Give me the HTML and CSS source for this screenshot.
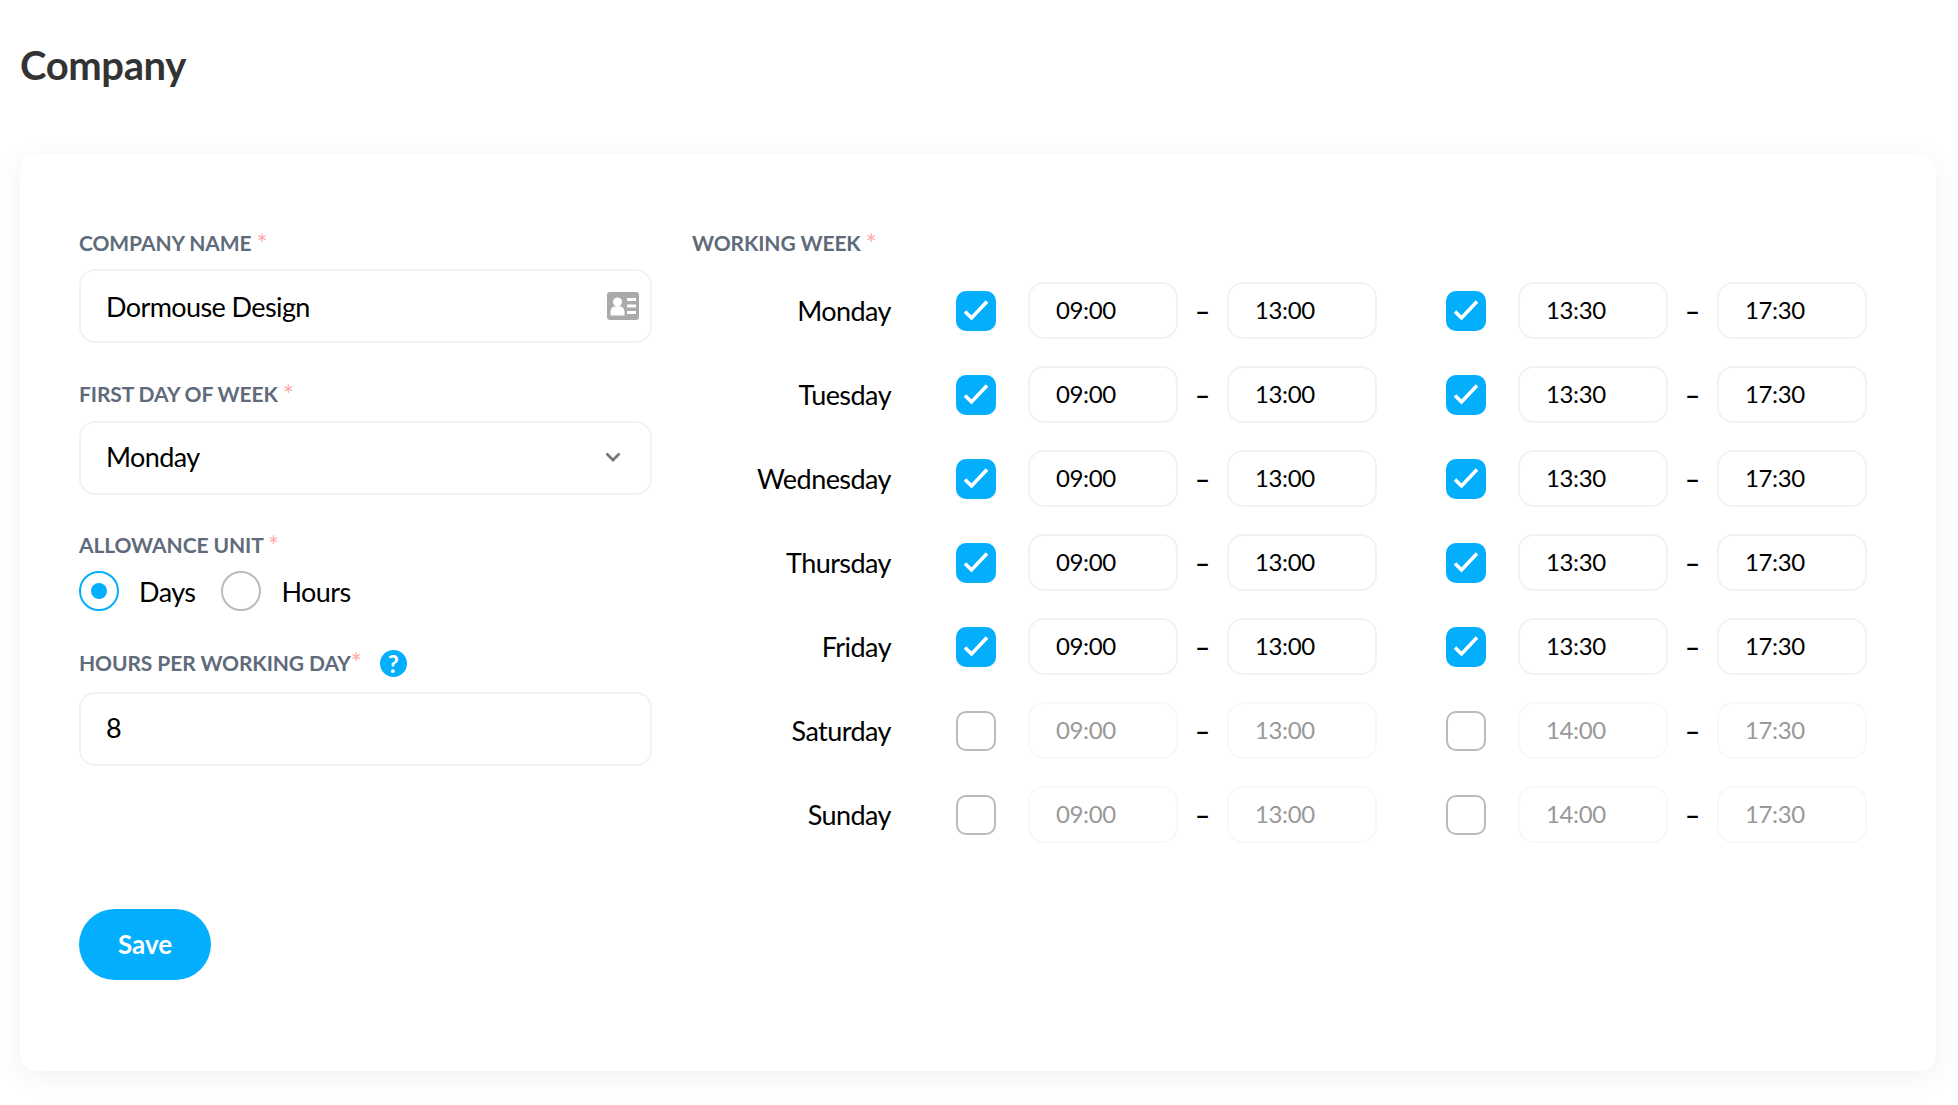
FILE: index.html
```html
<!DOCTYPE html>
<html lang="en">
<head>
<meta charset="utf-8">
<title>Company</title>
<link rel="stylesheet" href="styles.css">
</head>
<body>
<h1 class="page-title">Company</h1>
<form class="card">
  <div class="columns">
    <div class="col-left">
      <div class="field field-company">
        <div class="label">COMPANY NAME <span class="req">*</span></div>
        <div class="box">
          <span class="box-text">Dormouse Design</span>
          <svg class="icon-card" viewBox="0 0 32 28" width="32" height="28"><path fill="#aaa" fill-rule="evenodd" d="M3 0h26a3 3 0 0 1 3 3v22a3 3 0 0 1-3 3H3a3 3 0 0 1-3-3V3a3 3 0 0 1 3-3zM10.500 5.500a4.500 4.500 0 1 0 .01 0zM3.500 23.500h14v-4c0-3-2.500-5-4-5h-6c-1.500 0-4 2-4 5zM20 6v3h9V6zM20 12.500v3h9v-3zM20 19v3h9v-3z"/></svg>
        </div>
      </div>
      <div class="field field-day">
        <div class="label">FIRST DAY OF WEEK <span class="req">*</span></div>
        <div class="box box-raised">
          <span class="box-text">Monday</span>
          <svg class="icon-chevron" viewBox="0 0 16 10" width="16" height="10"><path d="M1.500 1.500 8 8 14.500 1.500" fill="none" stroke="#777" stroke-width="2.800"/></svg>
        </div>
      </div>
      <div class="field field-unit">
        <div class="label">ALLOWANCE UNIT <span class="req">*</span></div>
        <div class="radios">
          <span class="radio radio-on"></span><span class="radio-text">Days</span>
          <span class="radio"></span><span class="radio-text">Hours</span>
        </div>
      </div>
      <div class="field field-hours">
        <div class="label label-help">HOURS PER WORKING DAY<span class="req">*</span><span class="help">?</span></div>
        <div class="box box-raised"><span class="box-text">8</span></div>
      </div>
    </div>
    <div class="col-right">
      <div class="label">WORKING WEEK <span class="req">*</span></div>
      <div class="week">
        <div class="day-row"><span class="day">Monday</span>
          <span class="check check-on"><svg viewBox="0 0 40 40" width="40" height="40"><path d="M9 20.500 15.500 27 31 10.500" fill="none" stroke="#fff" stroke-width="3.600"/></svg></span><span class="time">09:00</span><span class="dash">–</span><span class="time">13:00</span>
          <span class="check check-on check-second"><svg viewBox="0 0 40 40" width="40" height="40"><path d="M9 20.500 15.500 27 31 10.500" fill="none" stroke="#fff" stroke-width="3.600"/></svg></span><span class="time">13:30</span><span class="dash">–</span><span class="time">17:30</span></div>
        <div class="day-row"><span class="day">Tuesday</span>
          <span class="check check-on"><svg viewBox="0 0 40 40" width="40" height="40"><path d="M9 20.500 15.500 27 31 10.500" fill="none" stroke="#fff" stroke-width="3.600"/></svg></span><span class="time">09:00</span><span class="dash">–</span><span class="time">13:00</span>
          <span class="check check-on check-second"><svg viewBox="0 0 40 40" width="40" height="40"><path d="M9 20.500 15.500 27 31 10.500" fill="none" stroke="#fff" stroke-width="3.600"/></svg></span><span class="time">13:30</span><span class="dash">–</span><span class="time">17:30</span></div>
        <div class="day-row"><span class="day">Wednesday</span>
          <span class="check check-on"><svg viewBox="0 0 40 40" width="40" height="40"><path d="M9 20.500 15.500 27 31 10.500" fill="none" stroke="#fff" stroke-width="3.600"/></svg></span><span class="time">09:00</span><span class="dash">–</span><span class="time">13:00</span>
          <span class="check check-on check-second"><svg viewBox="0 0 40 40" width="40" height="40"><path d="M9 20.500 15.500 27 31 10.500" fill="none" stroke="#fff" stroke-width="3.600"/></svg></span><span class="time">13:30</span><span class="dash">–</span><span class="time">17:30</span></div>
        <div class="day-row"><span class="day">Thursday</span>
          <span class="check check-on"><svg viewBox="0 0 40 40" width="40" height="40"><path d="M9 20.500 15.500 27 31 10.500" fill="none" stroke="#fff" stroke-width="3.600"/></svg></span><span class="time">09:00</span><span class="dash">–</span><span class="time">13:00</span>
          <span class="check check-on check-second"><svg viewBox="0 0 40 40" width="40" height="40"><path d="M9 20.500 15.500 27 31 10.500" fill="none" stroke="#fff" stroke-width="3.600"/></svg></span><span class="time">13:30</span><span class="dash">–</span><span class="time">17:30</span></div>
        <div class="day-row"><span class="day">Friday</span>
          <span class="check check-on"><svg viewBox="0 0 40 40" width="40" height="40"><path d="M9 20.500 15.500 27 31 10.500" fill="none" stroke="#fff" stroke-width="3.600"/></svg></span><span class="time">09:00</span><span class="dash">–</span><span class="time">13:00</span>
          <span class="check check-on check-second"><svg viewBox="0 0 40 40" width="40" height="40"><path d="M9 20.500 15.500 27 31 10.500" fill="none" stroke="#fff" stroke-width="3.600"/></svg></span><span class="time">13:30</span><span class="dash">–</span><span class="time">17:30</span></div>
        <div class="day-row"><span class="day">Saturday</span>
          <span class="check"></span><span class="time time-off">09:00</span><span class="dash">–</span><span class="time time-off">13:00</span>
          <span class="check check-second"></span><span class="time time-off">14:00</span><span class="dash">–</span><span class="time time-off">17:30</span></div>
        <div class="day-row"><span class="day">Sunday</span>
          <span class="check"></span><span class="time time-off">09:00</span><span class="dash">–</span><span class="time time-off">13:00</span>
          <span class="check check-second"></span><span class="time time-off">14:00</span><span class="dash">–</span><span class="time time-off">17:30</span></div>
      </div>
    </div>
  </div>
  <button class="save" type="button">Save</button>
</form>
</body>
</html>
```
FILE: styles.css
```css
* { box-sizing: border-box; }
html, body { margin: 0; padding: 0; background: #fff; }
body { font-family: Lato, "Liberation Sans", sans-serif; color: #000; height: 1105px; overflow: hidden; }

.page-title {
  margin: 0;
  padding: 43px 0 0 20px;
  height: 154px;
  font-size: 40px;
  line-height: 44px;
  letter-spacing: -0.4px;
  font-weight: 700;
  color: #333;
}

.card {
  margin: 0 22px 0 20px;
  height: 917px;
  padding: 74px 41px 0 59px;
  background: #fff;
  border-radius: 16px;
  box-shadow: 0 6px 30px rgba(0, 0, 0, 0.06);
}

.columns { display: flex; gap: 40px; height: 681px; }
.col-left { width: 573px; flex: none; }
.col-right { flex: 1; }

.label {
  font-size: 21px;
  line-height: 30px;
  letter-spacing: -0.1px;
  font-weight: 700;
  color: #5f6b7a;
  height: 24px;
}
.req { color: #ffaaaa; font-size: 26px; line-height: 0; font-weight: 400; vertical-align: -3px; }

.box {
  height: 74px;
  margin-top: 17px;
  padding: 0 11px 0 25px;
  border: 2px solid #f2f2f2;
  border-radius: 16px;
  display: flex;
  align-items: center;
  justify-content: space-between;
}
.box-raised { padding-bottom: 3px; }
.box-text { font-size: 27px; letter-spacing: -0.6px; }
.icon-chevron { margin-right: 18px; }

.field-day { margin-top: 36px; }
.field-day .box { margin-top: 18px; }
.field-unit { margin-top: 35px; }
.field-hours { margin-top: 37px; }
.label-help { display: flex; align-items: center; height: 30px; margin-bottom: -6px; }
.help {
  width: 27px;
  height: 27px;
  margin-left: 18px;
  border-radius: 50%;
  background: #03aefc;
  color: #fff;
  font-size: 24px;
  font-weight: 700;
  text-align: center;
  line-height: 27px;
  flex: none;
}
.field-hours .box { margin-top: 20px; }

.radios { display: flex; align-items: center; margin-top: 17px; }
.radio {
  width: 40px;
  height: 40px;
  border: 2px solid #bbb;
  border-radius: 50%;
  flex: none;
}
.radio-on { border-color: #03aefc; position: relative; }
.radio-on::after {
  content: "";
  position: absolute;
  inset: 10px;
  border-radius: 50%;
  background: #03aefc;
}
.radio-text { font-size: 27px; letter-spacing: -0.55px; margin: 0 26px 0 20px; }

.week { margin-top: 30px; display: flex; flex-direction: column; gap: 27px; }
.day-row { display: flex; align-items: center; height: 57px; }
.day { width: 199px; text-align: right; font-size: 27px; letter-spacing: -0.55px; flex: none; }
.check {
  width: 40px;
  height: 40px;
  margin: 0 32px 0 65px;
  border: 2px solid #bbb;
  border-radius: 10px;
  flex: none;
}
.check-on { border: 0; background: #03aefc; }
.check-on svg { display: block; }
.check-second { margin-left: 69px; }
.time {
  width: 150px;
  height: 57px;
  padding-left: 26px;
  border: 2px solid #f2f2f2;
  border-radius: 16px;
  font-size: 24px;
  letter-spacing: -0.4px;
  line-height: 52px;
  flex: none;
}
.time-off { color: #999; border-color: #f8f8f8; }
.dash { width: 49px; text-align: center; font-size: 26px; font-weight: 700; flex: none; }

.save {
  display: block;
  width: 132px;
  height: 71px;
  padding: 0 0 2px;
  border: 0;
  border-radius: 36px;
  background: #03aefc;
  color: #fff;
  font-family: inherit;
  font-size: 26px;
  font-weight: 700;
}
```
